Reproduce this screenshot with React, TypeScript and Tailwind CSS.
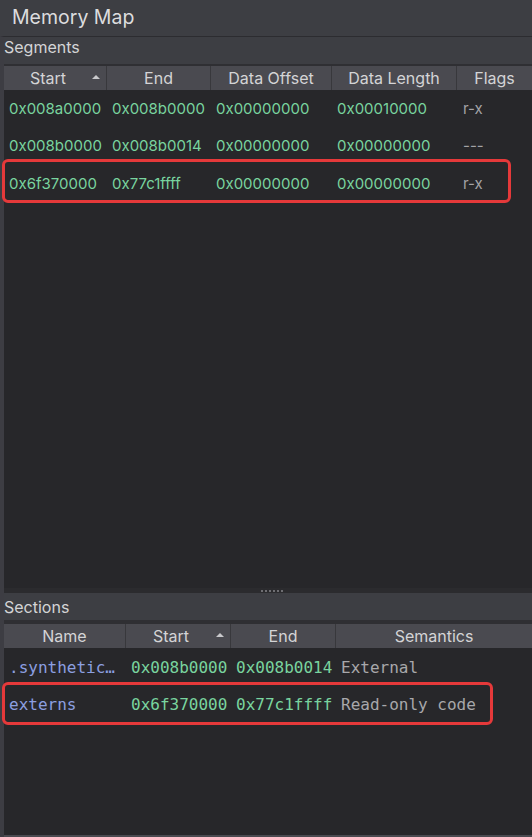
import { ReactNode } from "react";

type Col = { label: string; width: string; sorted?: boolean };

const segmentCols: Col[] = [
    { label: "Start", width: "w-[103px]", sorted: true },
    { label: "End", width: "w-[104px]" },
    { label: "Data Offset", width: "w-[121px]" },
    { label: "Data Length", width: "w-[125px]" },
    { label: "Flags", width: "flex-1" },
];

const sectionCols: Col[] = [
    { label: "Name", width: "w-[122px]" },
    { label: "Start", width: "w-[105px]", sorted: true },
    { label: "End", width: "w-[105px]" },
    { label: "Semantics", width: "flex-1" },
];

const segments = [
    ["0x008a0000", "0x008b0000", "0x00000000", "0x00010000", "r-x"],
    ["0x008b0000", "0x008b0014", "0x00000000", "0x00000000", "---"],
    ["0x6f370000", "0x77c1ffff", "0x00000000", "0x00000000", "r-x"],
];

const sections = [
    [".synthetic…", "0x008b0000", "0x008b0014", "External"],
    ["externs", "0x6f370000", "0x77c1ffff", "Read-only code"],
];

const sans = "font-['Inter','Noto_Sans',sans-serif]";
const mono = "font-['DejaVu_Sans_Mono','Liberation_Mono',monospace]";

function SortArrow() {
    return (
        <svg width="8" height="4" viewBox="0 0 8 4" className="absolute right-[6px] top-[9px]">
            <path d="M0 4 L4 0 L8 4 Z" fill="#c9c9cc" />
        </svg>
    );
}

function Header({ cols }: { cols: Col[] }) {
    return (
        <div className="flex h-6 bg-[#4a4a50] text-[16px] text-[#d4d4d6]">
            {cols.map((c, i) => (
                <div
                    key={c.label}
                    className={`relative flex items-center justify-center ${c.width} ${
                        c.sorted ? "pr-[14px]" : ""
                    } ${i < cols.length - 1 ? "border-r border-[#38383c]" : ""}`}
                >
                    {c.label}
                    {c.sorted && <SortArrow />}
                </div>
            ))}
        </div>
    );
}

function Highlight({ on, className, children }: { on: boolean; className: string; children: ReactNode }) {
    if (!on) return <>{children}</>;
    return (
        <div className="relative">
            {children}
            <div className={`pointer-events-none absolute rounded-[6px] border-[3px] border-[#e5393a] ${className}`} />
        </div>
    );
}

export default function App() {
    return (
        <div className={`flex h-[837px] w-[532px] flex-col overflow-hidden bg-[#27272a] ${sans}`}>
            <div className="flex h-9 shrink-0 items-center bg-[#3d3e43] pl-3 text-[19.5px] text-[#dcdcde]">
                Memory Map
            </div>

            <div className="flex flex-1 flex-col border-l-4 border-[#3d3d43] border-t border-t-[#2c2c30]">
                {/* segments pane */}
                <div className="flex h-[551px] flex-col">
                    <div className="h-[27px] bg-[#3d3e43] pt-px text-[16px] leading-[18px] text-[#d4d4d6]">
                        Segments
                    </div>
                    <div className="h-[2px] bg-[#2f2f33]" />
                    <Header cols={segmentCols} />
                    <div>
                        {segments.map((row, r) => (
                            <Highlight key={r} on={r === 2} className="-left-[2px] right-[21px] -top-[6px] bottom-[0px]">
                                <div className="flex h-[37.5px] items-center text-[15px]">
                                    {row.map((cell, i) => (
                                        <div
                                            key={i}
                                            className={`pl-[5px] ${segmentCols[i].width} ${
                                                i === 4 ? "pl-[6px] text-[#a3a3a6]" : "text-[#79d49f]"
                                            }`}
                                        >
                                            {cell}
                                        </div>
                                    ))}
                                </div>
                            </Highlight>
                        ))}
                    </div>
                </div>

                {/* splitter */}
                <div className="flex h-[5px] items-center justify-center bg-[#2b2b2e] pl-2">
                    <div className="flex gap-[2px]">
                        {[0, 1, 2, 3, 4, 5].map((d) => (
                            <span key={d} className="h-[2px] w-[2px] bg-[#6e6e72]" />
                        ))}
                    </div>
                </div>

                {/* sections pane */}
                <div className="flex flex-1 flex-col border-b-2 border-[#4a4a50]">
                    <div className="flex h-[27px] items-center bg-[#3d3e43] text-[16px] text-[#d4d4d6]">
                        Sections
                    </div>
                    <div className="h-[4px] bg-[#2f2f33]" />
                    <Header cols={sectionCols} />
                    <div className={`pt-px ${mono} text-[16px]`}>
                        {sections.map((row, r) => (
                            <Highlight key={r} on={r === 1} className="-left-[2px] right-[39px] -top-[4px] bottom-[-2px]">
                                <div className="flex h-[37px] items-center">
                                    {row.map((cell, i) => (
                                        <div
                                            key={i}
                                            className={`pl-[5px] whitespace-pre ${sectionCols[i].width} ${
                                                i === 0
                                                    ? "text-[#8c9fe0]"
                                                    : i === 3
                                                      ? "text-[#a8a8ab]"
                                                      : "text-[#79d49f]"
                                            }`}
                                        >
                                            {cell}
                                        </div>
                                    ))}
                                </div>
                            </Highlight>
                        ))}
                    </div>
                </div>
            </div>
        </div>
    );
}
